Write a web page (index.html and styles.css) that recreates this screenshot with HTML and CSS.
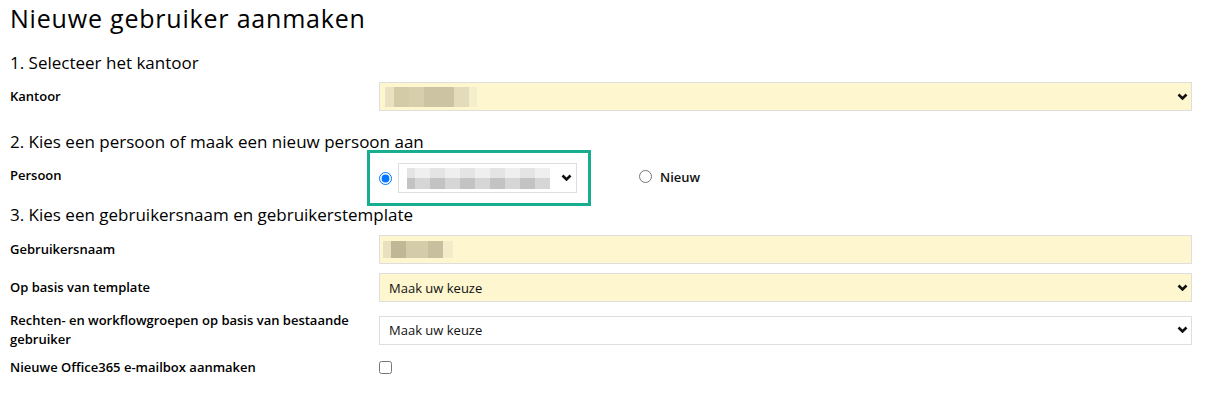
FILE: index.html
```html
<!DOCTYPE html>
<html lang="nl">
<head>
<meta charset="utf-8">
<title>Nieuwe gebruiker aanmaken</title>
<link rel="stylesheet" href="styles.css">
</head>
<body>
<div class="page">
  <h1 class="title">Nieuwe gebruiker aanmaken</h1>

  <h2 class="section s1">1. Selecteer het kantoor</h2>
  <div class="row first">
    <label class="lbl">Kantoor</label>
    <div class="field yellow">
      <span class="blur blur-kantoor">
        <i class="b1"></i><i class="b2"></i><i class="b3"></i><i class="b4"></i><i class="b5"></i>
      </span>
      <svg class="chev" width="11" height="8" viewBox="0 0 11 8"><path d="M1.5 1.5 L5.5 5.5 L9.5 1.5" fill="none" stroke="#111" stroke-width="2.6"/></svg>
    </div>
  </div>

  <h2 class="section s2">2. Kies een persoon of maak een nieuw persoon aan</h2>
  <div class="row person">
    <label class="lbl">Persoon</label>
    <div class="person-ctrl">
      <div class="highlight">
        <input type="radio" name="p" class="radio" checked>
        <div class="field small">
          <span class="blur blur-person">
            <i></i><i></i><i></i><i></i><i></i><i></i><i></i><i></i><i></i><i></i>
          </span>
          <svg class="chev" width="11" height="8" viewBox="0 0 11 8"><path d="M1.5 1.5 L5.5 5.5 L9.5 1.5" fill="none" stroke="#111" stroke-width="2.6"/></svg>
        </div>
      </div>
      <label class="nieuw"><input type="radio" name="p" class="radio"> <span>Nieuw</span></label>
    </div>
  </div>

  <h2 class="section s3">3. Kies een gebruikersnaam en gebruikerstemplate</h2>
  <div class="row first3">
    <label class="lbl">Gebruikersnaam</label>
    <div class="field yellow">
      <span class="blur blur-user"><i></i><i></i><i></i><i></i><i></i></span>
    </div>
  </div>
  <div class="row">
    <label class="lbl">Op basis van template</label>
    <div class="field yellow">
      <span class="val">Maak uw keuze</span>
      <svg class="chev" width="11" height="8" viewBox="0 0 11 8"><path d="M1.5 1.5 L5.5 5.5 L9.5 1.5" fill="none" stroke="#111" stroke-width="2.6"/></svg>
    </div>
  </div>
  <div class="row">
    <label class="lbl">Rechten- en workflowgroepen op basis van bestaande gebruiker</label>
    <div class="field">
      <span class="val">Maak uw keuze</span>
      <svg class="chev" width="11" height="8" viewBox="0 0 11 8"><path d="M1.5 1.5 L5.5 5.5 L9.5 1.5" fill="none" stroke="#111" stroke-width="2.6"/></svg>
    </div>
  </div>
  <div class="row">
    <label class="lbl">Nieuwe Office365 e-mailbox aanmaken</label>
    <div class="check-wrap"><input type="checkbox" class="check"></div>
  </div>
</div>
</body>
</html>
```

FILE: styles.css
```css
* { box-sizing: border-box; }

body {
  margin: 0;
  background: #fff;
  color: #111;
  font-family: "Open Sans", "Liberation Sans", sans-serif;
}

.page {
  padding: 0 26px 0 10px;
}

.title {
  margin: 0;
  font-size: 25px;
  font-weight: 400;
  line-height: 36px;
  letter-spacing: 0.8px;
  color: #000;
}

.section {
  margin: 0;
  font-size: 17px;
  font-weight: 500;
  line-height: 18px;
  color: #000;
}

.s1 { margin-top: 18px; }
.s2 { margin-top: 22px; }
.s3 { margin-top: 0; }

.row {
  display: grid;
  grid-template-columns: 369px 1fr;
  align-items: center;
  margin-top: 9px;
}

.row.first { margin-top: 10px; }
.row.first3 { margin-top: 11px; }
.row.person { margin-top: -1px; }
.row.person .lbl { margin-top: -6px; }

.lbl {
  font-size: 13px;
  line-height: 19px;
  font-weight: 600;
  color: #000;
  padding-right: 20px;
}

.field {
  display: flex;
  align-items: center;
  height: 29px;
  border: 1px solid #dedede;
  background: #fff;
  padding: 0 3px 0 9px;
  font-size: 13px;
  font-weight: 500;
  color: #111;
}

.field.yellow {
  background: #fdf6cf;
}

.field .val { flex: 1; }

.chev { margin-left: auto; flex: none; }

.blur { display: flex; height: 20px; }
.blur i { display: block; height: 100%; }

.blur-kantoor { width: 92px; margin-left: -4px; background: #f5eecc; }
.blur-kantoor .b1 { width: 9px; background: #e9e1c1; }
.blur-kantoor .b2 { width: 15px; background: #d3cba8; }
.blur-kantoor .b3 { width: 15px; background: #d7cfac; }
.blur-kantoor .b4 { width: 30px; background: #cbc3a1; }
.blur-kantoor .b5 { width: 15px; background: #e3dbb9; }

.blur-user { width: 70px; margin-left: -6px; height: 17px; }
.blur-user i:nth-child(1) { width: 8px; background: #e8e0bf; }
.blur-user i:nth-child(2) { width: 15px; background: #bfb796; }
.blur-user i:nth-child(3) { width: 22px; background: #d4cca9; }
.blur-user i:nth-child(4) { width: 15px; background: #c7bf9d; }
.blur-user i:nth-child(5) { width: 10px; background: #f3ebca; }

.person-ctrl {
  display: flex;
  align-items: center;
  margin-left: -12px;
}

.highlight {
  display: flex;
  align-items: center;
  border: 3px solid #17ad8e;
  padding: 10px 11px 10px 9px;
  width: 224px;
}

.radio {
  margin: 0 6px 0 0;
  width: 13px;
  height: 13px;
  flex: none;
}

.field.small {
  width: 179px;
  height: 30px;
  padding: 0 4px 0 8px;
}

.blur-person {
  display: grid;
  grid-template-columns: 8px 15px 15px 15px 15px 15px 15px 15px 15px 15px;
  height: 21px;
  width: 143px;
}
.blur-person i:nth-child(odd) { background: linear-gradient(#e4e4e4 0 48%, #c3c3c3 48% 100%); }
.blur-person i:nth-child(even) { background: linear-gradient(#efefef 0 48%, #d6d6d6 48% 100%); }

.nieuw {
  display: flex;
  align-items: center;
  margin-left: 48px;
  margin-top: -3px;
  font-size: 13px;
  font-weight: 600;
}
.nieuw .radio { margin-right: 8px; }

.check-wrap { display: flex; align-items: center; }
.check {
  margin: 0;
  width: 13px;
  height: 13px;
}
```
